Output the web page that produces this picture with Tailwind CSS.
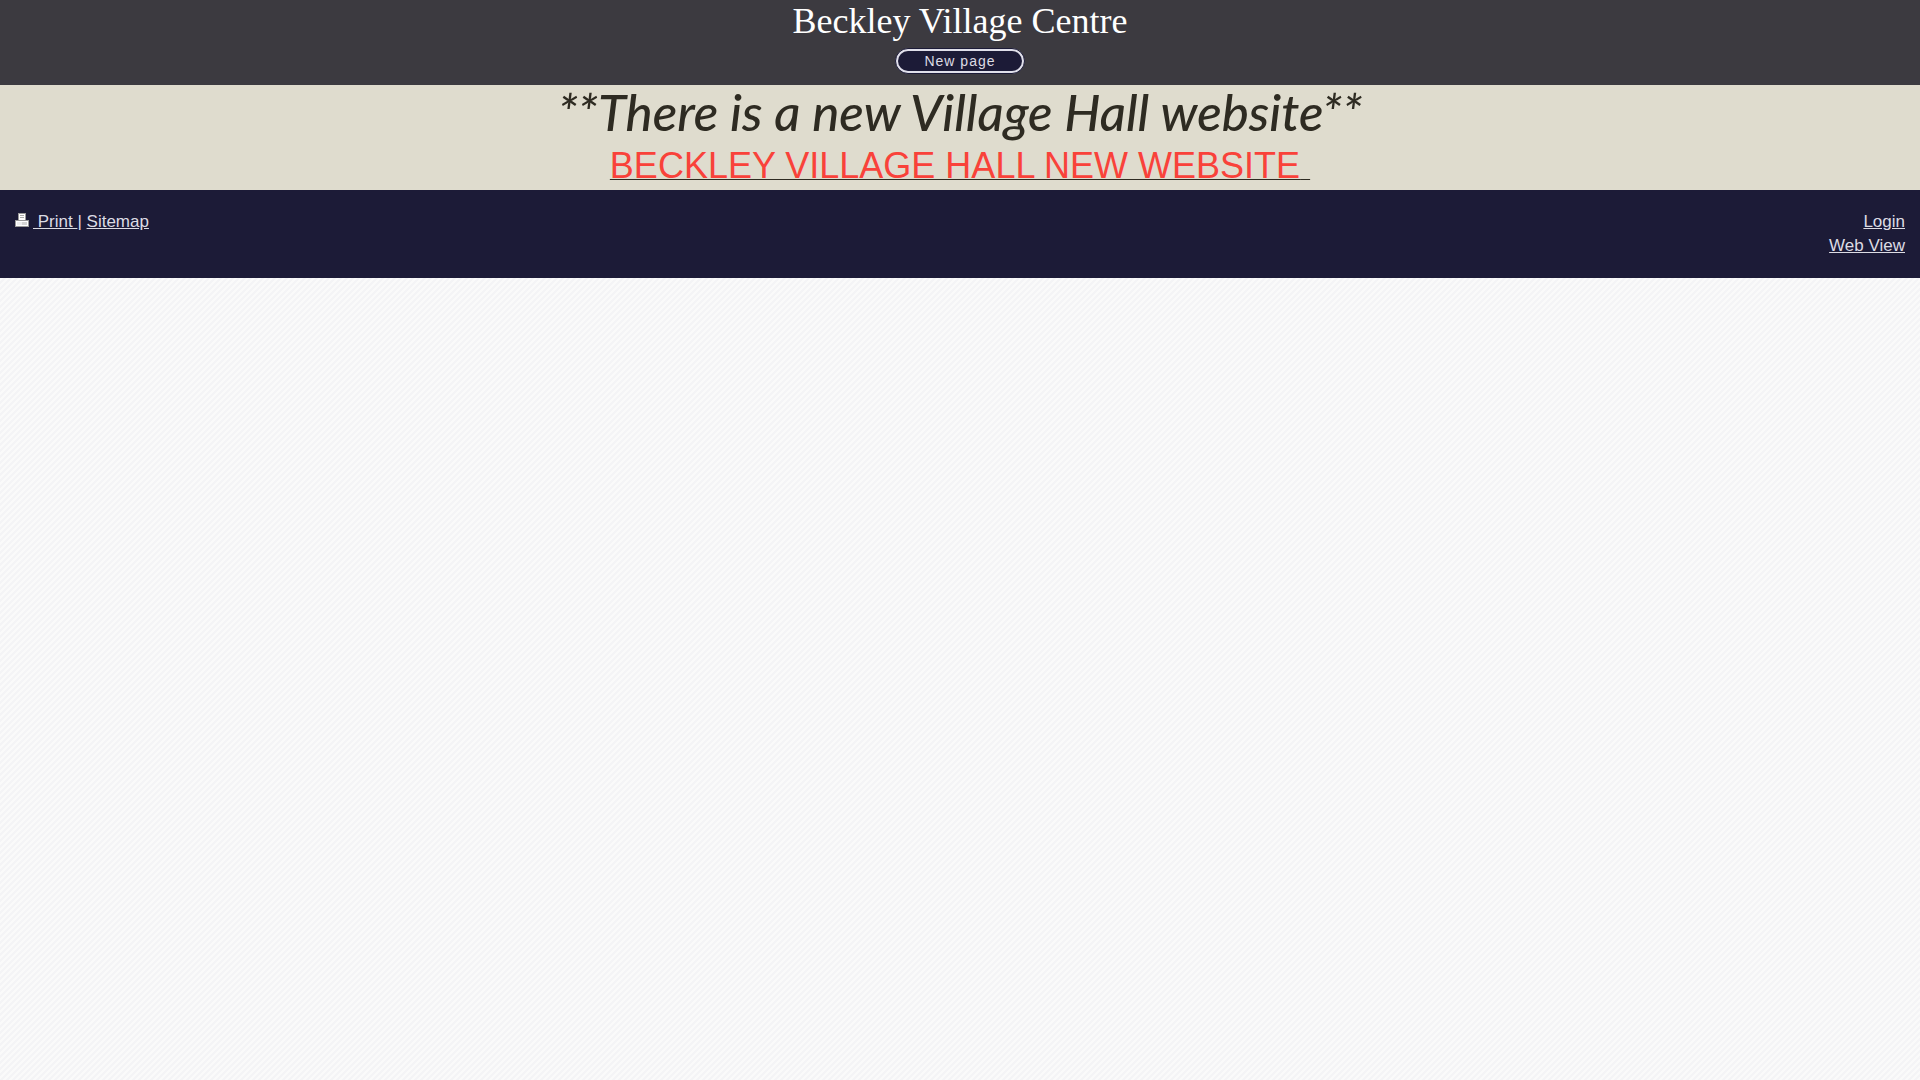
<!DOCTYPE html>
<html lang="en">
<head>
<meta charset="utf-8">
<meta name="viewport" content="width=device-width, initial-scale=1">
<title>Beckley Village Centre</title>
<script src="https://cdn.jsdelivr.net/npm/@tailwindcss/browser@4"></script>
</head>
<body class="min-h-screen bg-[#f7f7f8] bg-[linear-gradient(135deg,#f4f4f6_25%,#fafafa_25%,#fafafa_50%,#f4f4f6_50%,#f4f4f6_75%,#fafafa_75%)] bg-[length:6px_6px] font-['Liberation_Sans',Arial,sans-serif]">
<header class="flex flex-col items-center bg-[#3c3a40] pb-[11px]">
  <h1 class="h-12 pt-px font-['Liberation_Serif',serif] text-[36px] leading-10 text-white">Beckley Village Centre</h1>
  <nav>
    <button type="button" class="block h-[26px] w-[130px] rounded-full border border-[#1c1b37] bg-[#e0dfea] p-[2px]"><span class="flex h-full items-center justify-center rounded-full bg-[#1c1b37] text-[14px] leading-5 tracking-[1px] text-[#dcdce4]">New page</span></button>
  </nav>
</header>
<main class="bg-[#dfdcce] text-center text-[#2e2b22]">
  <p class="font-['Lato',sans-serif] text-[51px] leading-[54px] font-medium italic">**There is a new Village Hall website**</p>
  <p class="pt-[3px] text-[36px] leading-[48px]"><a href="#" class="underline decoration-[#2e2b22] decoration-1"><span class="text-[#f9423a]">BECKLEY VILLAGE HALL NEW WEBSITE</span>&nbsp;</a></p>
</main>
<footer class="flex justify-between bg-[#1c1b37] px-[15px] py-5 text-[17px] leading-6 text-[#dcdce4]">
  <div>
    <a href="#" class="underline"><svg class="mr-1 inline-block h-[14px] w-[14px] align-baseline" viewBox="0 0 14 14" shape-rendering="crispEdges" aria-hidden="true"><path fill="#999" d="M3 0h8v7h3v7H0V7h3z"/><path fill="#fff" d="M4 1h6v6H4zM1 8h12v5H1z"/><path fill="#aaa" d="M5 2h4v1H5zM5 4h4v1H5z"/><path fill="#d5d5d5" d="M2 9h10v3H2z"/><path fill="#eee" d="M2 9h5v3H2z"/></svg>&nbsp;Print </a>| <a href="#" class="underline">Sitemap</a>
  </div>
  <div class="flex flex-col items-end">
    <a href="#" class="underline">Login</a>
    <a href="#" class="underline">Web View</a>
  </div>
</footer>
</body>
</html>
